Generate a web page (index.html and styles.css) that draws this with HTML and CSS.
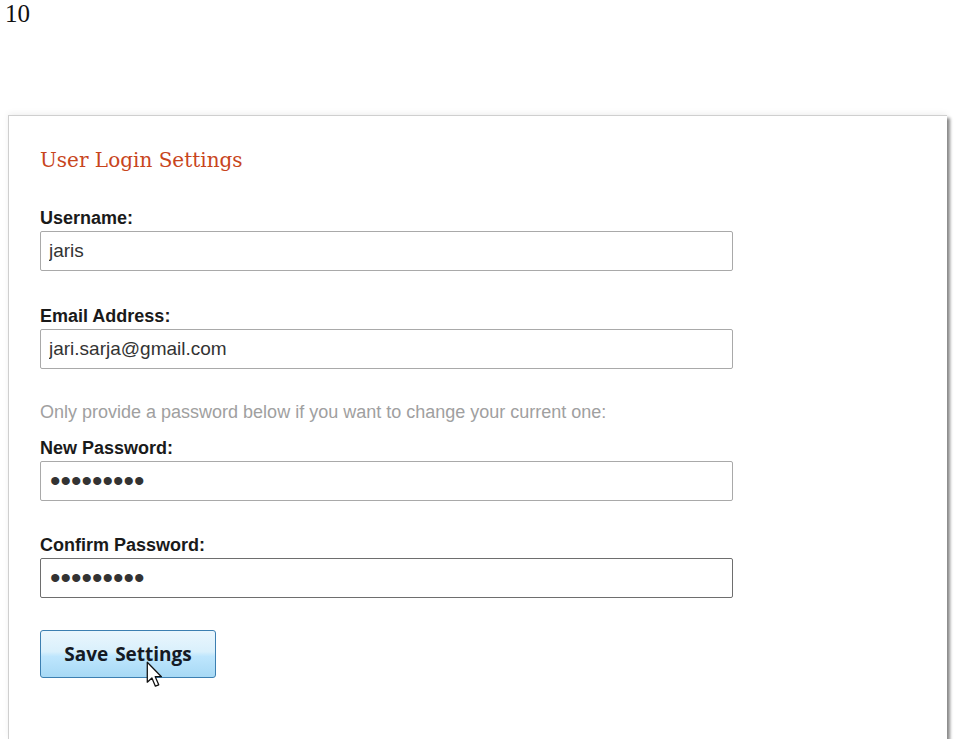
FILE: index.html
```html
<!DOCTYPE html>
<html lang="en">
<head>
<meta charset="UTF-8">
<title>User Login Settings</title>
<link rel="stylesheet" href="styles.css">
</head>
<body>

<div class="page-num">10</div>

<div class="panel">
  <h2>User Login Settings</h2>
  <form class="settings-form">
    <label for="username">Username:</label>
    <input type="text" id="username" value="jaris">

    <label for="email" class="spaced wide">Email Address:</label>
    <input type="text" id="email" value="jari.sarja@gmail.com">

    <p class="hint">Only provide a password below if you want to change your current one:</p>

    <label for="newPass">New Password:</label>
    <input type="password" id="newPass" class="pass" value="secretpwd">

    <label for="confirmPass" class="spaced">Confirm Password:</label>
    <input type="password" id="confirmPass" class="pass focused" value="secretpwd">

    <div class="actions">
      <button type="button">Save Settings</button>
      <!-- mouse pointer over the button -->
      <svg class="cursor" width="18" height="27" viewBox="0 0 14 21">
        <path d="M1 1 L1 16.5 L4.6 13.2 L7.3 19.6 L9.9 18.5 L7.2 12.2 L12 12.2 Z" fill="#fff" stroke="#111" stroke-width="1" stroke-linejoin="round"/>
      </svg>
    </div>
  </form>
</div>

</body>
</html>
```

FILE: styles.css
```css
body {
  margin: 0;
  padding: 0;
  background-color: #fff;
}
.page-num {
  font-family: "Liberation Serif", serif;
  font-size: 25px;
  line-height: 28px;
  padding-left: 5px;
  color: #111;
}
.panel {
  margin: 87px 0 0 8px;
  width: 939px;
  height: 624px;
  padding: 30px 0 0 31px;
  box-sizing: border-box;
  border-top: 1px solid #cfcfcf;
  border-left: 1px solid #cfcfcf;
  background-color: #fff;
  box-shadow: 3px 3px 3px rgba(0, 0, 0, 0.45), 0 -2px 6px rgba(0, 0, 0, 0.06);
}
h2 {
  margin: 0 0 33px 0;
  font-family: "DejaVu Serif", Georgia, serif;
  font-weight: normal;
  font-size: 20px;
  line-height: 28px;
  color: #c8451c;
}
.settings-form {
  display: flex;
  flex-direction: column;
  align-items: flex-start;
  font-family: "Liberation Sans", Arial, sans-serif;
}
label {
  display: block;
  margin-bottom: 2px;
  font-size: 18px;
  font-weight: bold;
  line-height: 22px;
  color: #1a1a1a;
}
label.spaced {
  margin-top: 33px;
}
label.wide {
  margin-top: 34px;
}
input {
  width: 693px;
  height: 40px;
  box-sizing: border-box;
  margin: 0;
  padding: 0 8px;
  border: 1px solid #a9a9a9;
  border-radius: 2px;
  font-family: "Liberation Sans", Arial, sans-serif;
  font-size: 19px;
  color: #333;
  background-color: #fff;
}
input.pass {
  font-size: 30px;
  padding-left: 9px;
  color: #333;
}
input.focused {
  border-color: #6e6e6e;
}
.hint {
  margin: 33px 0 15px 0;
  font-size: 18px;
  line-height: 20px;
  color: #a0a0a0;
}
.actions {
  position: relative;
  margin-top: 32px;
}
button {
  width: 176px;
  height: 48px;
  padding: 0;
  border: 1px solid #3c7fb1;
  border-radius: 3px;
  background: linear-gradient(to bottom, #eaf6fd 0%, #d9f0fc 45%, #bee6fd 55%, #a7d9f5 100%);
  font-family: "Open Sans", sans-serif;
  font-size: 19px;
  font-weight: bold;
  word-spacing: 2px;
  color: #151a24;
  cursor: default;
}
.cursor {
  position: absolute;
  left: 106px;
  top: 31px;
}
```
